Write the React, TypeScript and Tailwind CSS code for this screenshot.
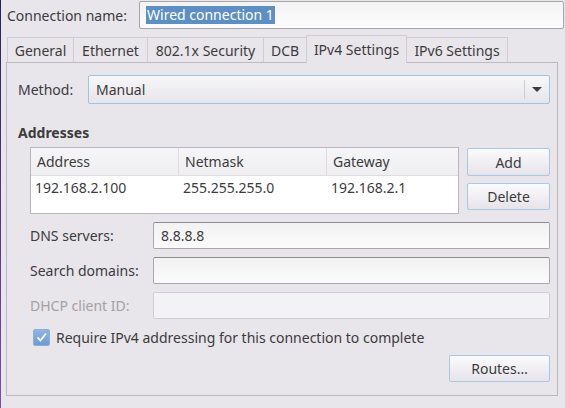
import React from 'react';

const font = { fontFamily: '"Noto Sans", "Open Sans", sans-serif' };

const tabs = ['General', 'Ethernet', '802.1x Security', 'DCB', 'IPv4 Settings', 'IPv6 Settings'];
const tabWidths = ['w-[67px]', 'w-[74px]', 'w-[116px]', 'w-[43px]', 'w-[101px]', 'w-[101px]'];

const Button: React.FC<{ label: string; className?: string }> = ({ label, className }) => (
  <div
    className={`flex items-center justify-center border border-[#a9c8e8] rounded-[2px] bg-gradient-to-b from-[#fbfafc] to-[#e6e4e9] ${className || ''}`}
  >
    {label}
  </div>
);

const Field: React.FC<{ label: string; value?: string; disabled?: boolean }> = ({ label, value, disabled }) => (
  <div className="flex items-center h-[27px]">
    <span className={`w-[123px] ${disabled ? 'text-[#a3a1a6]' : ''}`}>{label}</span>
    <div
      className={`w-[397px] h-[27px] flex items-center px-[7px] rounded-[2px] border ${
        disabled
          ? 'border-[#d0ced3] bg-[#f3f2f4]'
          : 'border-[#aaa8ac] border-t-[#8f8d92] bg-gradient-to-b from-[#f2f2f2] to-[#fbfbfb]'
      }`}
    >
      {value}
    </div>
  </div>
);

export default function App() {
  return (
    <div className="w-[565px] h-[408px] flex bg-[#e8e5eb] text-[#3c3c3c] text-[14px] overflow-hidden" style={font}>
      <div className="w-[1px] h-full bg-gradient-to-b from-[#23225e] to-[#8a45a6]" />
      <div className="flex-1 flex flex-col pl-[5px]">
        {/* connection name */}
        <div className="flex items-center h-[28px] mt-[1px]">
          <span className="w-[133px] pl-[1px]">Connection name:</span>
          <div className="w-[425px] h-[28px] flex items-center px-[6px] border border-[#a8a6ab] rounded-[2px] bg-gradient-to-b from-[#f3f3f3] to-[#fcfcfc]">
            <span className="bg-[#5d8fc4] text-white px-[1px] leading-[18px]">Wired connection 1</span>
          </div>
        </div>

        {/* tabs */}
        <div className="flex items-end h-[33px] pl-[1px]">
          {tabs.map((t, i) => {
            const active = t === 'IPv4 Settings';
            return (
              <div
                key={t}
                className={`${tabWidths[i]} flex items-center justify-center border-t border-r border-[#cfccd3] ${
                  i === 0 ? 'border-l' : ''
                } ${active ? 'h-[28px] bg-[#e8e5eb] relative top-[1px] border-l border-[#c3c0c7] -ml-[1px] z-10' : 'h-[25px] bg-[#e8e5eb]'}`}
              >
                {t}
              </div>
            );
          })}
        </div>

        {/* panel */}
        <div className="w-[552px] h-[334px] border border-[#bcb9c0] flex flex-col pl-[11px] pr-[7px] pt-[12px]">
          <div className="flex items-center h-[29px]">
            <span className="w-[70px]">Method:</span>
            <div className="w-[462px] h-[29px] flex items-center border border-[#9fc3e8] rounded-[2px] bg-gradient-to-b from-[#f7f6f8] to-[#e7e5ea]">
              <span className="flex-1 pl-[7px]">Manual</span>
              <div className="w-[1px] h-[19px] bg-[#cfcdd2]" />
              <div className="w-[24px] flex justify-center">
                <div className="w-0 h-0 border-l-[5px] border-r-[5px] border-t-[5px] border-l-transparent border-r-transparent border-t-[#3c3c3c]" />
              </div>
            </div>
          </div>

          <div className="font-bold mt-[19px] h-[20px] leading-[20px]">Addresses</div>

          <div className="flex mt-[4px] pl-[12px] gap-[8px]">
            <div className="w-[430px] h-[67px] border border-[#b9b6bd] bg-white flex flex-col">
              <div className="flex h-[28px] bg-gradient-to-b from-[#f6f5f7] to-[#efeef1] border-b border-[#dedce1]">
                <div className="w-[148px] flex items-center pl-[6px] border-r border-[#dedce1]">Address</div>
                <div className="w-[148px] flex items-center pl-[6px] border-r border-[#dedce1]">Netmask</div>
                <div className="flex-1 flex items-center pl-[6px]">Gateway</div>
              </div>
              <div className="flex h-[22px] items-center">
                <div className="w-[148px] pl-[4px]">192.168.2.100</div>
                <div className="w-[148px] pl-[4px]">255.255.255.0</div>
                <div className="flex-1 pl-[4px]">192.168.2.1</div>
              </div>
            </div>
            <div className="flex flex-col gap-[7px] pt-[1px]">
              <Button label="Add" className="w-[83px] h-[28px]" />
              <Button label="Delete" className="w-[83px] h-[27px]" />
            </div>
          </div>

          <div className="flex flex-col gap-[8px] mt-[8px] pl-[12px]">
            <Field label="DNS servers:" value="8.8.8.8" />
            <Field label="Search domains:" />
            <Field label="DHCP client ID:" disabled />
          </div>

          <div className="flex items-center mt-[9px] pl-[15px] h-[18px]">
            <div className="w-[17px] h-[17px] rounded-[2px] border border-[#8eaed3] bg-gradient-to-b from-[#8fb6e3] to-[#6c9bd4] flex items-center justify-center">
              <svg width="13" height="13" viewBox="0 0 13 13">
                <path d="M2.5 6.5 L5.5 9.5 L11 2.5" fill="none" stroke="white" strokeWidth="1.8" />
              </svg>
            </div>
            <span className="ml-[6px]">Require IPv4 addressing for this connection to complete</span>
          </div>

          <div className="flex justify-end mt-[9px]">
            <Button label="Routes…" className="w-[101px] h-[27px]" />
          </div>
        </div>
      </div>
    </div>
  );
}
